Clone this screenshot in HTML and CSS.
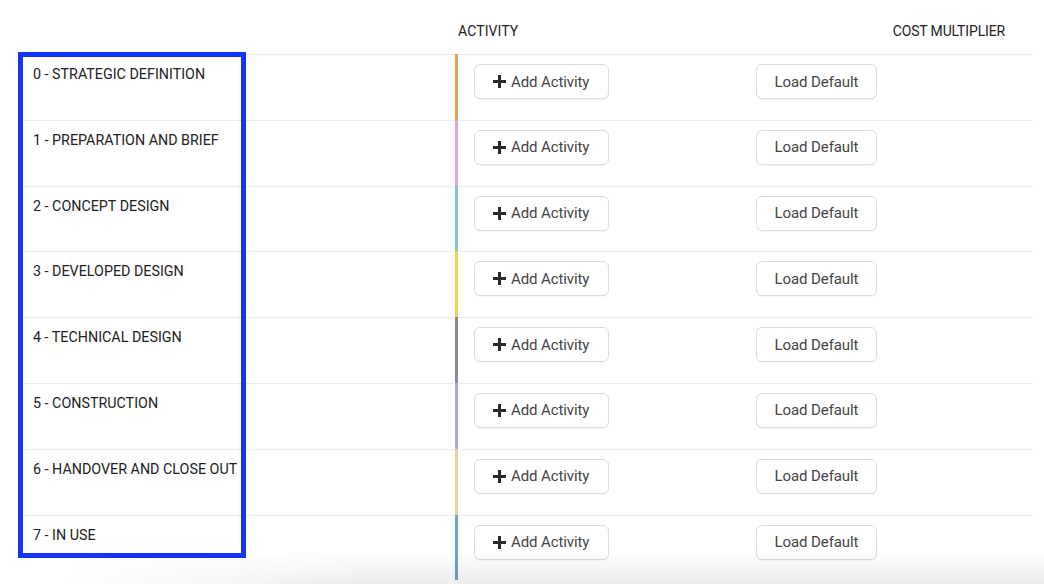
FILE: index.html
```html
<!DOCTYPE html>
<html>
<head>
<meta charset="utf-8">
<link rel="stylesheet" href="styles.css">
</head>
<body>
<div class="page">
  <div class="table">
    <div class="head">
      <div class="h-name"></div>
      <div class="h-activity">ACTIVITY</div>
      <div class="h-cost">COST MULTIPLIER</div>
    </div>
    <div class="row"><div class="name">0 - STRATEGIC DEFINITION</div><div class="bar c0"></div><div class="act"><button class="btn"><svg class="plus" viewBox="0 0 13 13"><path d="M5 0h3v5h5v3H8v5H5V8H0V5h5z"/></svg>Add Activity</button></div><div class="cost"><button class="btn">Load Default</button></div></div>
    <div class="row"><div class="name">1 - PREPARATION AND BRIEF</div><div class="bar c1"></div><div class="act"><button class="btn"><svg class="plus" viewBox="0 0 13 13"><path d="M5 0h3v5h5v3H8v5H5V8H0V5h5z"/></svg>Add Activity</button></div><div class="cost"><button class="btn">Load Default</button></div></div>
    <div class="row"><div class="name">2 - CONCEPT DESIGN</div><div class="bar c2"></div><div class="act"><button class="btn"><svg class="plus" viewBox="0 0 13 13"><path d="M5 0h3v5h5v3H8v5H5V8H0V5h5z"/></svg>Add Activity</button></div><div class="cost"><button class="btn">Load Default</button></div></div>
    <div class="row"><div class="name">3 - DEVELOPED DESIGN</div><div class="bar c3"></div><div class="act"><button class="btn"><svg class="plus" viewBox="0 0 13 13"><path d="M5 0h3v5h5v3H8v5H5V8H0V5h5z"/></svg>Add Activity</button></div><div class="cost"><button class="btn">Load Default</button></div></div>
    <div class="row"><div class="name">4 - TECHNICAL DESIGN</div><div class="bar c4"></div><div class="act"><button class="btn"><svg class="plus" viewBox="0 0 13 13"><path d="M5 0h3v5h5v3H8v5H5V8H0V5h5z"/></svg>Add Activity</button></div><div class="cost"><button class="btn">Load Default</button></div></div>
    <div class="row"><div class="name">5 - CONSTRUCTION</div><div class="bar c5"></div><div class="act"><button class="btn"><svg class="plus" viewBox="0 0 13 13"><path d="M5 0h3v5h5v3H8v5H5V8H0V5h5z"/></svg>Add Activity</button></div><div class="cost"><button class="btn">Load Default</button></div></div>
    <div class="row"><div class="name">6 - HANDOVER AND CLOSE OUT</div><div class="bar c6"></div><div class="act"><button class="btn"><svg class="plus" viewBox="0 0 13 13"><path d="M5 0h3v5h5v3H8v5H5V8H0V5h5z"/></svg>Add Activity</button></div><div class="cost"><button class="btn">Load Default</button></div></div>
    <div class="row"><div class="name">7 - IN USE</div><div class="bar c7"></div><div class="act"><button class="btn"><svg class="plus" viewBox="0 0 13 13"><path d="M5 0h3v5h5v3H8v5H5V8H0V5h5z"/></svg>Add Activity</button></div><div class="cost"><button class="btn">Load Default</button></div></div>
  </div>
  <div class="highlight"></div>
  <div class="fade"></div>
</div>
</body>
</html>
```

FILE: styles.css
```css
html, body {
  margin: 0;
  padding: 0;
  background: #fff;
}
body {
  font-family: Roboto, "Liberation Sans", sans-serif;
  color: #222;
  width: 1044px;
  height: 584px;
  overflow: hidden;
}
.page {
  position: relative;
  width: 1044px;
  height: 584px;
}
.table {
  margin-left: 24px;
  width: 1009px;
}
.head {
  display: flex;
  height: 54px;
  align-items: flex-start;
  font-size: 14px;
  font-weight: 400;
  color: #222;
}
.h-name {
  width: 434px;
}
.h-activity {
  padding-top: 23px;
  letter-spacing: 0.1px;
}
.h-cost {
  margin-left: auto;
  padding-top: 23px;
  padding-right: 28px;
  letter-spacing: -0.15px;
}
.row {
  display: flex;
  height: 64.8px;
  border-top: 1px solid #ececec;
}
.name {
  width: 422px;
  padding: 11px 0 0 9px;
  font-size: 14.3px;
  font-weight: 400;
  letter-spacing: 0px;
  color: #222;
  white-space: nowrap;
}
.bar {
  width: 3px;
  margin-top: -1px;
}
.c0 { background: #eba04b; }
.c1 { background: #e3a7ca; }
.c2 { background: #80c6cd; }
.c3 { background: #f5d14f; }
.c4 { background: #868c93; }
.c5 { background: #aaa7d5; }
.c6 { background: #ecd39c; }
.c7 { background: #6ba4d8; }
.act {
  width: 282px;
  padding: 9px 0 0 16px;
}
.cost {
  padding-top: 9px;
}
.btn {
  display: flex;
  align-items: center;
  gap: 5px;
  height: 35px;
  padding: 0 18px;
  background: #fff;
  border: 1px solid #dcdcdc;
  border-radius: 6px;
  font-family: Roboto, "Liberation Sans", sans-serif;
  font-size: 15px;
  font-weight: 400;
  color: #444;
  letter-spacing: -0.1px;
  white-space: nowrap;
  box-shadow: 0 1px 1px rgba(0,0,0,0.04);
}
.act .btn {
  width: 135px;
}
.cost .btn {
  width: 121px;
  padding: 0;
  justify-content: center;
}
.plus {
  width: 13px;
  height: 13px;
  fill: #2a2a2a;
  flex: none;
}
.highlight {
  position: absolute;
  left: 18px;
  top: 52px;
  width: 218px;
  height: 496px;
  border: 5px solid #1535f6;
}
.fade {
  position: absolute;
  left: 0;
  bottom: 0;
  width: 1044px;
  height: 34px;
  background: linear-gradient(to bottom, rgba(0,0,0,0), rgba(0,0,0,0.07));
  -webkit-mask-image: linear-gradient(to right, transparent 60px, #000 360px);
  mask-image: linear-gradient(to right, transparent 60px, #000 360px);
  pointer-events: none;
}
```
